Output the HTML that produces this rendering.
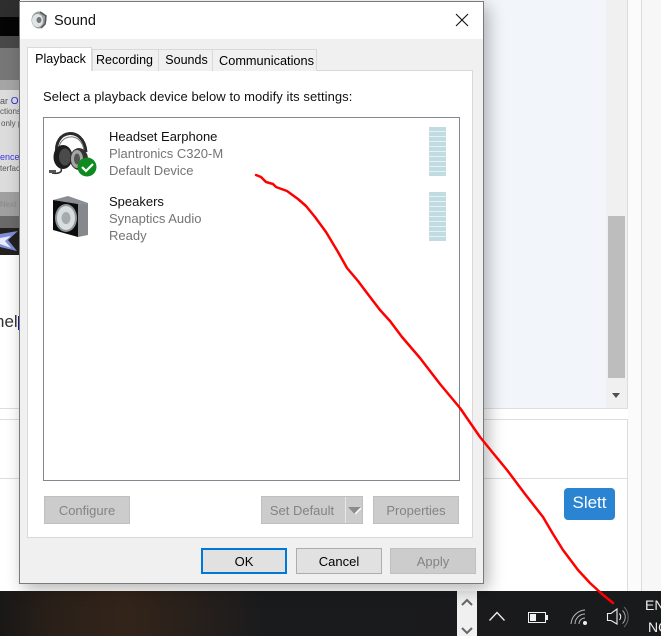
<!DOCTYPE html>
<html><head><meta charset="utf-8">
<style>
html,body{margin:0;padding:0;background:#fff}
#p{position:relative;width:661px;height:636px;overflow:hidden;background:#fff;font-family:"Liberation Sans",sans-serif;font-size:13px;color:#000}
#p div{position:absolute;box-sizing:border-box}
.t{white-space:nowrap;line-height:17px}
.g{color:#747474}
.tab{top:49px;height:22px;background:#f0f0f0;border:1px solid #d9d9d9;border-bottom:none;text-align:center;line-height:21px;white-space:nowrap;font-size:12.500px}
.btn{height:28px;background:#ccc;border:1px solid #bfbfbf;color:#838383;text-align:center;line-height:27px}
.b2{height:26px;top:548px;background:#e1e1e1;border:1px solid #adadad;text-align:center;line-height:25px;font-size:13px}
</style></head><body>
<div id="p">
<!-- left background app -->
<div style="left:0;top:0;width:20px;height:17px;background:#2e2e2e"></div>
<div style="left:0;top:17px;width:20px;height:19px;background:#050505"></div>
<div style="left:0;top:36px;width:20px;height:12px;background:#484848"></div>
<div style="left:0;top:48px;width:20px;height:32px;background:#777"></div>
<div style="left:0;top:80px;width:20px;height:10px;background:#a5a5a5"></div>
<div style="left:0;top:90px;width:20px;height:102px;background:#dcdcdc"></div>
<div style="left:0;top:192px;width:20px;height:24px;background:#a0a0a0"></div>
<div style="left:0;top:216px;width:20px;height:12px;background:#6a6a6a"></div>
<div style="left:0;top:228px;width:20px;height:27px;background:#23201f"></div>
<svg style="position:absolute;left:0;top:228px" width="20" height="27"><path d="M0 6L18 3L8 12L17 23L0 19Z" fill="#7f8fd8"/><path d="M0 10L11 8L5 13L11 20L0 16Z" fill="#e8ecf8"/></svg>
<div class="t" style="left:0;top:93px;font-size:9px;color:#555;width:20px;overflow:hidden">ar<span style="color:#2a2ae0;font-size:10px"> Ou</span></div>
<div class="t" style="left:0;top:103px;font-size:8px;color:#555;width:20px;overflow:hidden">ctions</div>
<div class="t" style="left:1px;top:115px;font-size:8px;color:#555;width:19px;overflow:hidden">only p</div>
<div class="t" style="left:0;top:149px;font-size:9px;color:#3a3ae0;width:20px;overflow:hidden">ence t</div>
<div class="t" style="left:0;top:160px;font-size:8px;color:#555;width:20px;overflow:hidden">terfac</div>
<div class="t" style="left:0;top:196px;font-size:8px;color:#888;width:20px;overflow:hidden">Next &gt;</div>
<div style="left:0;top:313px;width:19px;height:20px;overflow:hidden"><div class="t" style="left:-5px;top:0;font-size:17px;color:#333">nel</div></div>
<div style="left:18px;top:316px;width:2px;height:14px;background:#1a1a9a"></div>

<!-- right background -->
<div style="left:483px;top:0;width:123px;height:408px;background:#f2f6fa"></div>
<div style="left:0;top:408px;width:628px;height:1px;background:#dedede"></div>
<div style="left:606px;top:0;width:21px;height:408px;background:#f0f0f0"></div>
<div style="left:608px;top:216px;width:17px;height:162px;background:#bdbdbd"></div>
<svg style="position:absolute;left:611px;top:392px" width="10" height="8"><path d="M1 1H9L5 6Z" fill="#505050"/></svg>
<div style="left:628px;top:0;width:13px;height:591px;background:#fbfbfb"></div>
<div style="left:627px;top:0;width:1px;height:408px;background:#dcdcdc"></div>
<div style="left:641px;top:0;width:1px;height:591px;background:#dcdcdc"></div>
<div style="left:642px;top:0;width:19px;height:591px;background:#f7f7f7"></div>
<div style="left:0;top:419px;width:628px;height:1px;background:#dedede"></div>
<div style="left:0;top:478px;width:628px;height:1px;background:#dedede"></div>
<div style="left:627px;top:419px;width:1px;height:172px;background:#dcdcdc"></div>
<div style="left:564px;top:488px;width:51px;height:32px;background:#2a84d2;border-radius:4px;color:#fff;font-size:17px;text-align:center;line-height:30px">Slett</div>

<!-- taskbar -->
<div style="left:0;top:591px;width:661px;height:45px;background:linear-gradient(90deg,#191716 0,#2a2019 8%,#33241a 19%,#2a211b 27%,#1a1b1d 40%,#191a1b 100%)"></div>
<div style="left:457px;top:591px;width:20px;height:45px;background:#f0f0f0"></div>
<svg style="position:absolute;left:457px;top:591px" width="204" height="45" fill="none">
<path d="M5 14L10 9L15 14M5 37L10 42L15 37" stroke="#666" stroke-width="2"/>
<path d="M32.500 29.500L40 21.500L47.500 29.500" stroke="#eee" stroke-width="1.300"/>
<rect x="71.500" y="21.500" width="17" height="10" stroke="#f2f2f2" fill="none"/>
<rect x="73" y="23" width="6" height="7" fill="#f2f2f2"/>
<rect x="89" y="24" width="2" height="5" fill="#f2f2f2"/>
<path d="M114 33a15 15 0 0 1 14 -14M118 33a10 10 0 0 1 10 -10M122 33a6 6 0 0 1 6 -6" stroke="#bbb" stroke-width="1"/>
<circle cx="128" cy="32" r="2" fill="#eee"/>
<path d="M150.500 22.500H154L160 18V33L154 29.500H150.500Z" stroke="#eee" stroke-width="1.100"/>
<path d="M162.500 22.500a5 5 0 0 1 0 6.500" stroke="#eee" stroke-width="1.100"/>
<path d="M165.500 19.500a9 9 0 0 1 0 13" stroke="#aaa" stroke-width="1"/>
<path d="M167 16a14 14 0 0 1 0 20" stroke="#666" stroke-width="1"/>
</svg>
<div class="t" style="left:645px;top:597px;font-size:14px;color:#eee">EN</div>
<div class="t" style="left:648px;top:619px;font-size:14px;color:#eee">NO</div>

<!-- dialog shadow + dialog -->
<div style="left:19px;top:1px;width:465px;height:583px;background:#f0f0f0;border:1px solid #7a7a7a;box-shadow:4px 5px 16px rgba(0,0,0,.3)"></div>
<div style="left:20px;top:2px;width:463px;height:37px;background:#fff"></div>
<svg style="position:absolute;left:29px;top:10px" width="20" height="20"><ellipse cx="10" cy="10" rx="7.500" ry="8.500" fill="#9a9fa2"/><ellipse cx="8.500" cy="10.500" rx="5.500" ry="6.500" fill="#dfe4e6"/><ellipse cx="10" cy="10" rx="2.500" ry="3" fill="#777"/><path d="M11 2L17 6L16 14L12 18" fill="none" stroke="#555" stroke-width="1.500"/></svg>
<div class="t" style="left:54px;top:13px;font-size:14.500px;color:#111">Sound</div>
<svg style="position:absolute;left:455px;top:13px" width="14" height="14"><path d="M1 1L13 13M13 1L1 13" stroke="#111" stroke-width="1.100"/></svg>

<!-- tab page -->
<div style="left:27px;top:70px;width:446px;height:468px;background:#fff;border:1px solid #d9d9d9"></div>
<div class="tab" style="left:92px;width:67px;padding-right:2px">Recording</div>
<div class="tab" style="left:158px;width:55px;padding-left:2px">Sounds</div>
<div class="tab" style="left:212px;width:105px;font-size:12.750px;padding-left:4px">Communications</div>
<div class="tab" style="left:27px;top:47px;width:65px;height:24px;background:#fff;line-height:22px;padding-left:2px">Playback</div>

<div class="t" style="left:43px;top:88px;letter-spacing:.07px;color:#111">Select a playback device below to modify its settings:</div>

<!-- list -->
<div style="left:43px;top:117px;width:417px;height:364px;background:#fff;border:1px solid #828790"></div>

<!-- headset -->
<svg style="position:absolute;left:48px;top:128px" width="52" height="50">
<path d="M9 27C4 1 36 -3 38 24" fill="none" stroke="#2b2b2b" stroke-width="3"/>
<path d="M11 25C8 6 34 2 36 23" fill="none" stroke="#777" stroke-width="1"/>
<ellipse cx="15" cy="29" rx="9.500" ry="12" fill="#1d1d1d"/>
<ellipse cx="17" cy="29" rx="6" ry="8.500" fill="#4a4a4a"/>
<ellipse cx="31" cy="31" rx="9" ry="11" fill="#333"/>
<ellipse cx="29" cy="31" rx="6" ry="9" fill="#a5a5a5"/>
<ellipse cx="29" cy="31" rx="3" ry="5.500" fill="#555"/>
<path d="M13 40C15 45 9 46 4 45" fill="none" stroke="#333" stroke-width="1.500"/>
<rect x="1" y="42" width="7" height="3" fill="#555"/>
<circle cx="39" cy="39" r="9.500" fill="#0e8a20"/>
<path d="M34 39L38 43L45 36" fill="none" stroke="#fff" stroke-width="2.200"/>
</svg>
<!-- speakers -->
<svg style="position:absolute;left:50px;top:194px" width="42" height="46">
<path d="M3 6L18 2L38 9L28 10Z" fill="#8a8d91"/>
<path d="M28 10L38 9V41L28 43Z" fill="#85888c"/>
<path d="M3 6L28 10V43L3 36Z" fill="#0c0c0c"/>
<ellipse cx="16" cy="24" rx="11" ry="14" fill="#8f9598"/>
<ellipse cx="16" cy="24" rx="9" ry="12" fill="#d8dde0"/>
<ellipse cx="16" cy="24" rx="4.500" ry="6" fill="#a5abaf"/>
</svg>

<div class="t" style="left:109px;top:128px;color:#111">Headset Earphone</div>
<div class="t g" style="left:109px;top:145px">Plantronics C320-M</div>
<div class="t g" style="left:109px;top:162px">Default Device</div>
<div class="t" style="left:109px;top:193px;color:#111">Speakers</div>
<div class="t g" style="left:109px;top:210px">Synaptics Audio</div>
<div class="t g" style="left:109px;top:227px">Ready</div>

<!-- meters -->
<div style="left:429px;top:127px;width:17px;height:49px;background:repeating-linear-gradient(180deg,#c1dbe2 0,#c1dbe2 4px,#e6f1f4 4px,#e6f1f4 5px)"></div>
<div style="left:429px;top:192px;width:17px;height:49px;background:repeating-linear-gradient(180deg,#c1dbe2 0,#c1dbe2 4px,#e6f1f4 4px,#e6f1f4 5px)"></div>

<!-- buttons -->
<div class="btn" style="left:44px;top:496px;width:86px">Configure</div>
<div class="btn" style="left:261px;top:496px;width:102px;padding-right:20px">Set Default</div>
<div style="left:345px;top:497px;width:1px;height:26px;background:#e8e8e8"></div>
<svg style="position:absolute;left:348px;top:507px" width="14" height="8"><path d="M0 0H13L6.500 7Z" fill="#8c8c8c"/><path d="M7 7L13 1" stroke="#fff" stroke-width="1.500"/></svg>
<div class="btn" style="left:373px;top:496px;width:86px">Properties</div>

<div class="b2" style="left:201px;width:86px;border:2px solid #0078d7;line-height:23px;color:#000">OK</div>
<div class="b2" style="left:296px;width:86px;color:#000">Cancel</div>
<div class="b2" style="left:390px;width:86px;background:#ccc;border-color:#bfbfbf;color:#838383">Apply</div>

<!-- red line -->
<svg style="position:absolute;left:0;top:0" width="661" height="636" fill="none">
<path d="M256 175L261 177L266 182L273 184L276 187L287 191L298 199L306 206L315 217L326 232L338 252L347 268L358 281L367 293L380 310L390 321L402 337L420 358L440 384L460 408L480 437L493 453L507 470L525 494L543 517L553 534L563 550L578 570L590 583L602 594L613 603" stroke="#f00" stroke-width="2.500" stroke-linejoin="round" stroke-linecap="round"/>
</svg>
</div>
</body></html>
